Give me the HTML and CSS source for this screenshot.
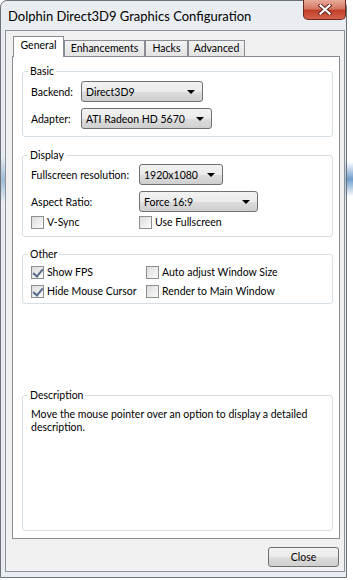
FILE: index.html
```html
<!DOCTYPE html>
<html lang="en">
<head>
    <meta charset="UTF-8">
    <meta name="viewport" content="width=device-width, initial-scale=1.0">
    <title>Dolphin Direct3D9 Graphics Configuration</title>
    <link rel="stylesheet" href="styles.css">
</head>
<body>
    <div class="window">
        <div class="titlebar">
            <div class="title">Dolphin Direct3D9 Graphics Configuration</div>
            <div class="btn-close">
                <svg width="14" height="11" viewBox="0 0 14 11">
                    <path d="M2.5 1.5 L11.5 9.5 M11.5 1.5 L2.5 9.5" stroke="#5a2019" stroke-width="4" stroke-linecap="square"/>
                    <path d="M2.5 1.5 L11.5 9.5 M11.5 1.5 L2.5 9.5" stroke="#fff" stroke-width="2.2" stroke-linecap="square"/>
                </svg>
            </div>
        </div>
        <div class="client">
            <div class="tabs">
                <div class="tab active" style="width: 51px">General</div>
                <div class="tab" style="width: 81px">Enhancements</div>
                <div class="tab" style="width: 43px">Hacks</div>
                <div class="tab" style="width: 57px">Advanced</div>
            </div>
            <div class="panel">
                <fieldset class="group basic">
                    <legend>Basic</legend>
                    <div class="grid grid-basic">
                        <label>Backend:</label>
                        <div class="combo" style="width: 122px">Direct3D9<span class="arrow"></span></div>
                        <label>Adapter:</label>
                        <div class="combo" style="width: 131px">ATI Radeon HD 5670<span class="arrow"></span></div>
                    </div>
                </fieldset>
                <fieldset class="group display">
                    <legend>Display</legend>
                    <div class="grid grid-display">
                        <label>Fullscreen resolution:</label>
                        <div class="combo" style="width: 84px">1920x1080<span class="arrow"></span></div>
                        <label>Aspect Ratio:</label>
                        <div class="combo" style="width: 119px">Force 16:9<span class="arrow"></span></div>
                        <div class="check"><span class="box"></span>V-Sync</div>
                        <div class="check"><span class="box"></span>Use Fullscreen</div>
                    </div>
                </fieldset>
                <fieldset class="group other">
                    <legend>Other</legend>
                    <div class="grid grid-other">
                        <div class="check"><span class="box checked"></span>Show FPS</div>
                        <div class="check"><span class="box"></span>Auto adjust Window Size</div>
                        <div class="check"><span class="box checked"></span>Hide Mouse Cursor</div>
                        <div class="check"><span class="box"></span>Render to Main Window</div>
                    </div>
                </fieldset>
                <fieldset class="group description">
                    <legend>Description</legend>
                    <p>Move the mouse pointer over an option to display a detailed description.</p>
                </fieldset>
            </div>
            <div class="buttons">
                <button class="btn">Close</button>
            </div>
        </div>
    </div>
</body>
</html>
```

FILE: styles.css
```css
* {
    box-sizing: border-box;
}
body {
    margin: 0;
    font-family: Lato, "Open Sans", sans-serif;
    font-size: 10.5px;
    color: #000;
    background: linear-gradient(180deg, #fff 0, #fff 28%, #6f9ccc 31%, #fff 34%, #fff 100%);
}
.window {
    width: 347px;
    height: 578px;
    border: 1px solid #6d7278;
    border-radius: 7px 7px 0 0;
    background: linear-gradient(180deg, #e9edf1 0, #e9edf1 27%, #9fbcd9 31%, #e9edf1 35%, #e9edf1 100%);
    display: flex;
    flex-direction: column;
}
.titlebar {
    height: 29px;
    display: flex;
    align-items: flex-start;
}
.title {
    padding: 7px 0 0 7px;
    font-size: 13px;
    color: #000;
}
.btn-close {
    margin-left: auto;
    margin-top: -1px;
    width: 43px;
    height: 20px;
    border: 1px solid #6b2a20;
    border-top: none;
    border-radius: 0 0 5px 5px;
    background: linear-gradient(180deg, #e9a999 0, #d67a66 45%, #c2402a 55%, #d4634c 100%);
    display: flex;
    align-items: center;
    justify-content: center;
}
.client {
    flex: 1;
    margin: 0 1px 5px 4px;
    border: 1px solid #8c939a;
    background: #f0f0f0;
    padding: 5px 4px 0 6px;
    display: flex;
    flex-direction: column;
}
.tabs {
    display: flex;
    align-items: flex-end;
    padding-left: 1px;
    height: 20px;
    position: relative;
    z-index: 1;
}
.tab {
    height: 16px;
    border: 1px solid #898c95;
    border-bottom: none;
    background: linear-gradient(180deg, #f2f2f2, #e3e3e3);
    text-align: center;
    line-height: 15px;
}
.tab.active {
    height: 21px;
    margin-bottom: -1px;
    background: #fff;
    line-height: 17px;
}
.panel {
    height: 483px;
    border: 1px solid #898c95;
    background: #fff;
    padding: 6px 6px 7px 9px;
    display: flex;
    flex-direction: column;
}
.group {
    margin: 0;
    border: 1px solid #d5dfe5;
    border-radius: 3px;
    padding: 0 8px;
    min-width: 0;
}
.group legend {
    padding: 0 2px;
    margin-left: -3px;
    line-height: 16px;
}
.basic {
    padding-top: 2px;
    padding-bottom: 7px;
}
.display {
    margin-top: 10px;
    padding-top: 1px;
    padding-bottom: 6px;
}
.other {
    margin-top: 9px;
    padding-top: 2px;
    padding-bottom: 4px;
}
.description {
    margin-top: auto;
    height: 144px;
    padding-top: 5px;
}
.description p {
    margin: 0;
    line-height: 13px;
}
.grid {
    display: grid;
    align-items: center;
}
.grid-basic {
    grid-template-columns: 50px auto;
    row-gap: 6px;
}
.grid-display {
    grid-template-columns: 108px auto;
    row-gap: 6px;
}
.grid-display .check {
    margin-top: -4px;
}
.grid-other {
    grid-template-columns: 115px auto;
    row-gap: 3px;
}
.combo {
    height: 21px;
    border: 1px solid #707070;
    border-radius: 3px;
    background: linear-gradient(180deg, #f2f2f2 0, #ebebeb 50%, #dddddd 51%, #cfcfcf 100%);
    display: flex;
    align-items: center;
    padding-left: 4px;
    white-space: nowrap;
}
.arrow {
    margin-left: auto;
    margin-right: 7px;
    border-left: 4px solid transparent;
    border-right: 4px solid transparent;
    border-top: 4px solid #000;
}
.check {
    display: flex;
    align-items: center;
    height: 16px;
    white-space: nowrap;
}
.box {
    width: 13px;
    height: 13px;
    border: 1px solid #8e8f8f;
    background: linear-gradient(135deg, #dcdcdc, #fbfbfb);
    margin-right: 3px;
    flex: none;
}
.box.checked {
    position: relative;
}
.box.checked::after {
    content: "";
    position: absolute;
    left: 3px;
    top: 0;
    width: 4px;
    height: 8px;
    border-right: 2px solid #5a6c8c;
    border-bottom: 2px solid #5a6c8c;
    transform: rotate(40deg);
}
.buttons {
    display: flex;
    justify-content: flex-end;
    padding-top: 8px;
}
.btn {
    width: 71px;
    height: 20px;
    border: 1px solid #707070;
    border-radius: 3px;
    background: linear-gradient(180deg, #f2f2f2 0, #ebebeb 50%, #dddddd 51%, #cfcfcf 100%);
    font-family: inherit;
    font-size: 10.5px;
    padding: 0;
    margin-right: 1px;
}
```
